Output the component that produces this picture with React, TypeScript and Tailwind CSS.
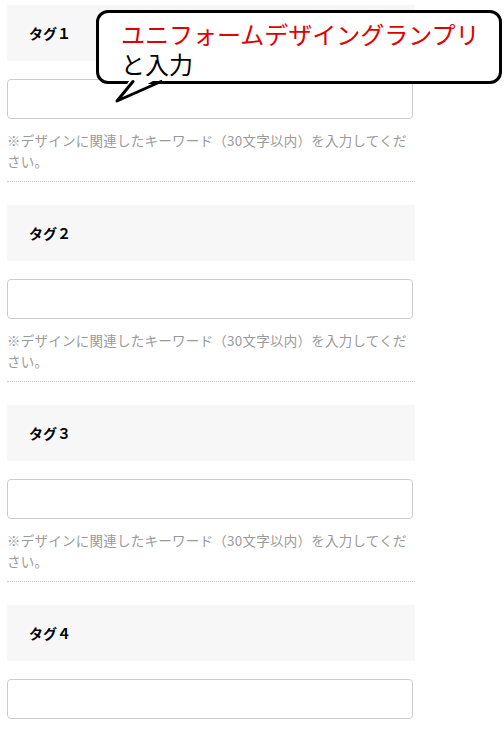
import React from "react";

const sections = ["１", "２", "３", "４"];

export default function App() {
  return (
    <div
      className="relative w-[504px] h-[731px] overflow-hidden bg-white"
      style={{ fontFamily: '"Noto Sans CJK JP", "Noto Sans", sans-serif' }}
    >
      <div className="pl-[7px] pt-[5px] w-[415px]">
        {sections.map((n) => (
          <section key={n} className="mb-[23px]">
            <div className="h-[56px] bg-[#f7f7f7] flex items-center pl-[22px] text-[14px] font-bold text-black">
              タグ{n}
            </div>
            <div className="mt-[18px] h-[40px] w-[406px] border border-[#cccccc] rounded-[4px] bg-white" />
            <p className="mt-[11px] text-[13.5px] leading-[21px] tracking-[0.25px] text-[#9a9a9a]">
              ※デザインに関連したキーワード（30文字以内）を入力してください。
            </p>
            <div className="mt-[9px] border-b border-dotted border-[#cccccc]" />
          </section>
        ))}
      </div>

      <div className="absolute left-[96px] top-[10px] w-[406px] h-[74px] border-[3px] border-black rounded-[12px] bg-white pl-[22px] pt-[6px] text-[24px] leading-[30px]">
        <div className="text-[#e00000]">ユニフォームデザイングランプリ</div>
        <div className="text-black">と入力</div>
      </div>
      <svg
        className="absolute left-[110px] top-[76px]"
        width="60"
        height="30"
        viewBox="0 0 60 30"
      >
        <polygon points="22,0 7,25 52,0" fill="white" />
        <polyline
          points="23,5.5 7,25 51,5.5"
          fill="none"
          stroke="black"
          strokeWidth="3"
          strokeLinejoin="round"
          strokeLinecap="round"
        />
      </svg>
    </div>
  );
}
